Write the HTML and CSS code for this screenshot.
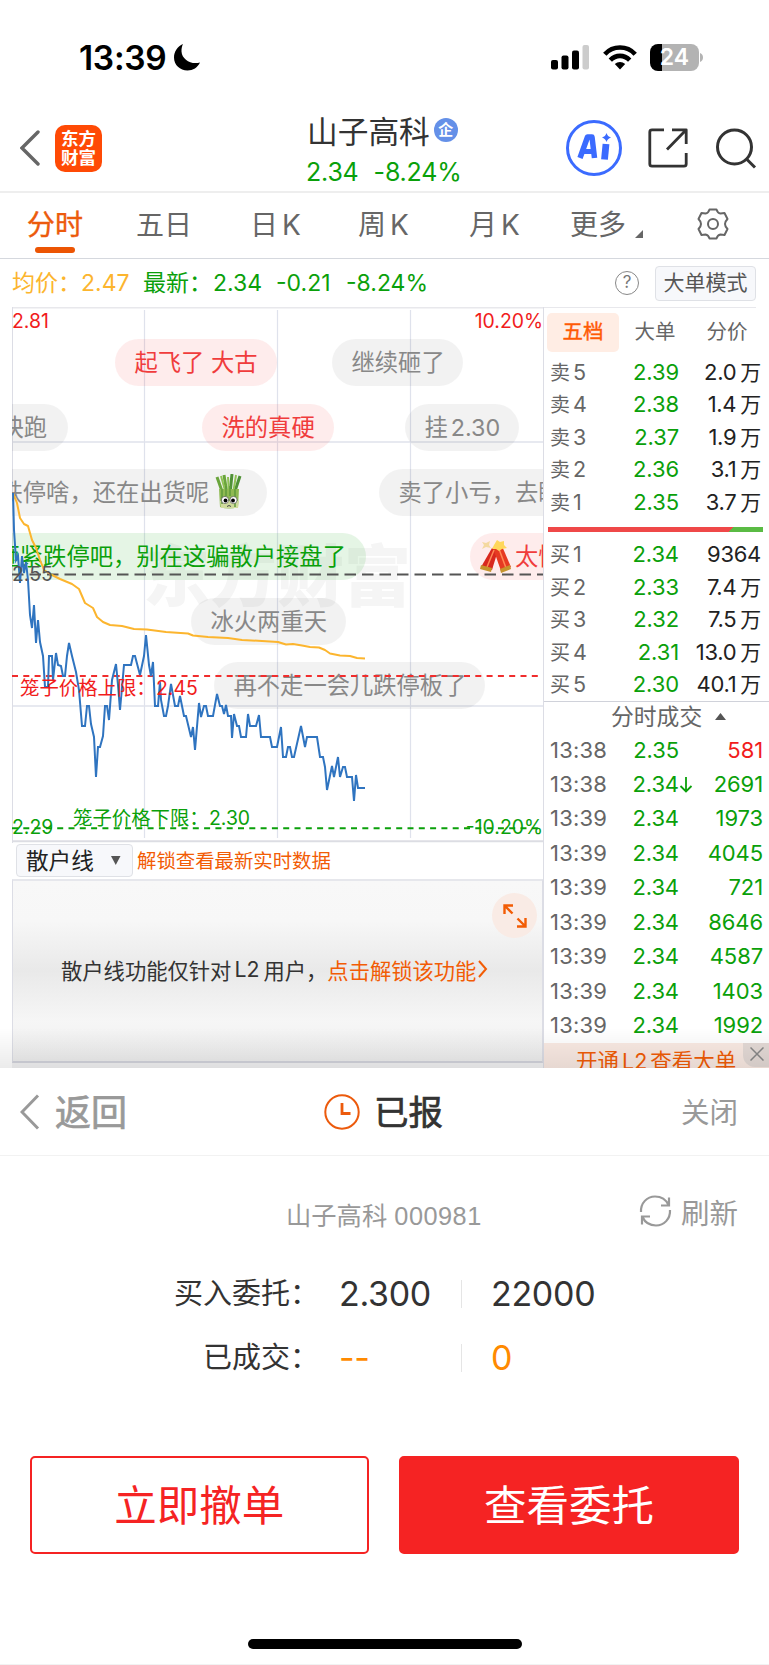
FILE: index.html
```html
<!DOCTYPE html>
<html lang="zh">
<head>
    <meta charset="UTF-8">
    <meta name="viewport" content="width=device-width, initial-scale=1.0">
    <title>山子高科</title>
    <link rel="stylesheet" href="styles.css">
</head>
<body>
    <div class="page">
        <!-- 状态栏 -->
        <div class="status-bar">
            <span class="time">13:39</span>
            <svg class="moon" width="26" height="27" viewBox="0 0 26 27"><path d="M9 0C3.500 2.500 0 7.500 0 13.500C0 21 6 26.500 13.500 26.500C19 26.500 23.700 23.500 26 18.500C17 21 8 15.500 7.500 7.500C7.400 4.500 8 2 9 0Z"/></svg>
            <svg class="signal" width="38" height="25" viewBox="0 0 38 25"><rect x="0" y="15" width="7" height="9.500" rx="2"/><rect x="10.500" y="10.500" width="7" height="14" rx="2"/><rect x="21" y="5.500" width="7" height="19" rx="2"/><rect x="31.500" y="0" width="6.500" height="24.500" rx="2" fill="#ccc"/></svg>
            <svg class="wifi" width="34" height="25" viewBox="0 0 34 25"><g fill="none" stroke="#000" stroke-width="4.600"><path d="M1.800 9.200C10 .3 24 .3 32.200 9.200"/><path d="M7.300 15.200C12.800 9.400 21.200 9.400 26.700 15.200"/></g><path d="M11.800 19C14.800 16.200 19.200 16.200 22.200 19L17 24.500Z"/></svg>
            <div class="battery">24</div>
            <svg class="battery-cap" width="4" height="9" viewBox="0 0 4 9"><path d="M0 0C4 1 4 8 0 9Z" fill="#b3b3b3"/></svg>
        </div>

        <!-- 标题 -->
        <div class="header">
            <svg class="back" width="20" height="36" viewBox="0 0 20 36"><path d="M18 2L2 18L18 34" fill="none" stroke="#666" stroke-width="3.400" stroke-linecap="round"/></svg>
            <div class="logo"><span>东方</span><span>财富</span></div>
            <div class="title">
                <div class="name">山子高科<span class="badge">企</span></div>
                <div class="price"><span>2.34</span><span>-8.24%</span></div>
            </div>
            <svg class="ai" width="56" height="56" viewBox="0 0 56 56"><circle cx="28" cy="28" r="26.500" fill="#fff" stroke="#3b6bff" stroke-width="3"/><path d="M14 38L21.500 17H26L28.500 38" fill="none" stroke="#3b6bff" stroke-width="5.500" stroke-linejoin="round"/><path d="M16 31.500H28" stroke="#3b6bff" stroke-width="5"/><path d="M40 24L38.500 39.500" stroke="#3b6bff" stroke-width="6.800"/><path d="M40.500 13Q41.500 16.500 45 17.500Q41.500 18.500 40.500 22Q39.500 18.500 36 17.500Q39.500 16.500 40.500 13Z" fill="#3b6bff"/></svg>
            <svg class="share" width="40" height="40" viewBox="0 0 40 40"><g fill="none" stroke="#333" stroke-width="2.800" stroke-linejoin="round"><path d="M16 1.800H4Q1.800 1.800 1.800 4V36Q1.800 38.200 4 38.200H36Q38.200 38.200 38.200 36V25"/><path d="M24 1.800H38.200V16M37.500 2.500L19 21.500"/></g></svg>
            <svg class="search" width="41" height="41" viewBox="0 0 41 41"><g fill="none" stroke="#333" stroke-width="3"><circle cx="18.500" cy="19" r="17"/><path d="M31 31.500L39 39.500"/></g></svg>
        </div>

        <!-- 周期切换 -->
        <div class="tabs">
            <div class="tab t1 active">分时</div>
            <div class="tab t2">五日</div>
            <div class="tab t3">日<i>K</i></div>
            <div class="tab t4">周<i>K</i></div>
            <div class="tab t5">月<i>K</i></div>
            <div class="tab t6">更多</div>
            <svg class="corner" width="8" height="8"><path d="M8 0V8H0Z" fill="#666"/></svg>
            <svg class="gear" width="32" height="32" viewBox="0 0 32 32"><g fill="none" stroke="#666" stroke-width="2"><path d="M12.500 1.500H19.500Q20.500 5 23.500 5.500L27.500 5L30.500 11Q28 13.500 28 16Q28 18.500 30.500 21L27.500 27L23.500 26.500Q20.500 27 19.500 30.500H12.500Q11.500 27 8.500 26.500L4.500 27L1.500 21Q4 18.500 4 16Q4 13.500 1.500 11L4.500 5L8.500 5.500Q11.500 5 12.500 1.500Z" stroke-linejoin="round"/><circle cx="16" cy="16" r="5"/></g></svg>
        </div>

        <div class="info">
            <span class="avg">均价：</span><span class="avg v1">2.47</span>
            <span class="green l2">最新：</span><span class="green v2">2.34</span><span class="green v3">-0.21</span><span class="green v4">-8.24%</span>
            <span class="help">?</span>
            <span class="mode">大单模式</span>
        </div>

        <div class="main">
            <div class="left">
                <!-- 分时图 -->
                <div class="chart">
                    <svg class="chart-svg" width="532" height="536" viewBox="12 307 532 536">
                        <g stroke="#dfe2ec" stroke-width="1.200">
                            <path d="M144.500 310V838M277.500 310V838M410.500 310V838"/>
                            <path d="M12 442H543M12 706H543" stroke-width="1.500"/>
                        </g>
                        <path d="M12 307.800H543" stroke="#e8e8ec" stroke-width="1.600"/>
                        <path d="M12.500 307V843" stroke="#dcdde5"/>
                        <path d="M12 841.200H543" stroke="#dcdde3" stroke-width="2"/>
                        <text class="watermark" x="143" y="601">东方财富</text>
                    </svg>

                    <!-- 弹幕 -->
                    <div class="danmu">
                        <span class="pill red" style="left:103px;top:32px;width:162px">起飞了 大古</span>
                        <span class="pill" style="left:320px;top:32px;width:131px">继续砸了</span>
                        <span class="pill end" style="left:-40px;top:97px;width:96px">快跑</span>
                        <span class="pill red" style="left:190px;top:97px;width:132px">洗的真硬</span>
                        <span class="pill" style="left:393px;top:97px;width:114px">挂<i>2.30</i></span>
                        <span class="pill" style="left:-32px;top:162px;width:287px">跌停啥，还在出货呢
                            <svg class="leek" width="28" height="36" viewBox="0 0 28 36"><g fill="none" stroke-width="3"><path d="M8 20L2 3M12 20L9 1" stroke="#6aa53c"/><path d="M15 20L17 0M19 20L25 2" stroke="#4f9136"/><path d="M11 20L6 2M14 20L13 3M18 20L21 1" stroke="#8fc255" stroke-width="2"/></g><path d="M4 15H24L23 33Q14 36 5 33Z" fill="#8fba52"/><path d="M5 27H24L23 34H6Z" fill="#cfdb9c"/><path d="M7 15V30M11 12V22M15 12V22M20 15V33" stroke="#5f9a3c" stroke-width="1.500"/><circle cx="10" cy="26" r="3.600" fill="#fff" stroke="#555" stroke-width=".7"/><circle cx="18.500" cy="26" r="3.600" fill="#fff" stroke="#555" stroke-width=".7"/><circle cx="10.500" cy="26.500" r="1.900"/><circle cx="18" cy="26.500" r="1.900"/><path d="M12 32.500Q14 30.500 16 32.500" fill="none" stroke="#444"/></svg></span>
                        <span class="pill" style="left:367px;top:162px;width:220px">卖了小亏，去睡觉</span>
                        <span class="pill grn" style="left:-35px;top:226px;width:389px">砸紧跌停吧，别在这骗散户接盘了</span>
                        <span class="pill red cracker" style="left:458px;top:226px;width:140px">
                            <svg width="32" height="34" viewBox="0 0 32 34"><path d="M12 8L19 7L12 30L1 27Z" fill="#d8281e"/><path d="M13 8L22 6L31 27L21 31Z" fill="#e63a22"/><path d="M14 10L7 27M19 9L26 28" stroke="#ff8a55" stroke-width="1.500"/><path d="M1 25L12 28L11 32L0 29ZM20 29L30 25L31 29L21 33Z" fill="#c6942c"/><path d="M17 0L20 2L24 1L24 5L27 8L22 9L19 11L16 9L12 9L14 5Z" fill="#ffd75c"/><path d="M2 2L6 3L10 1L9 5L11 8L6 7L2 9L4 5Z" fill="#f4d9a0"/></svg>太惨了</span>
                        <span class="pill" style="left:179px;top:291px;width:155px">冰火两重天</span>
                        <span class="pill" style="left:202px;top:355px;width:271px">再不走一会儿跌停板了</span>
                    </div>

                    <svg class="chart-svg over" width="532" height="536" viewBox="12 307 532 536">
                        <path d="M12 574.500H543" stroke="#555" stroke-width="1.800" stroke-dasharray="11.500 6"/>
                        <path d="M12 676H543" stroke="#f02d2d" stroke-width="2" stroke-dasharray="6 5.300"/>
                        <path d="M12 828.300H543" stroke="#0aa00a" stroke-width="2" stroke-dasharray="6 5.300"/>
                        <polyline class="avg-line" points="13,493 17,503 20,518 24,524 28,526 32,540 36,548 40,560 44,570 52,575 60,579 72,584 79,589 85,603 93,608 97,617 103,622 110,625 122,626 134,629 147,629.500 166,632 188,633.500 193,635.500 208,637 228,638 242,640 262,641 278,642 286,644.500 293,644 302,645.500 310,647 319,647.500 325,650 330,653.500 340,655.500 350,656 357,658 365,658.500"/>
                        <polyline class="price-line" points="13,493 14,530 16,560 18,556 20,583 22,556 24,573 26,562 28,580 30,615 32,628 34,605 36,643 38,620 40,642 43,656 45,687 48,687 49,656 52,656 53,680 56,653 58,665 61,666 63,676 65,676 67,656 69,643 72,656 76,672 79,690 82,726 85,726 87,706 89,706 91,724 94,737 96,777 98,747 100,747 103,736 105,706 107,706 109,720 112,680 116,664 118,685 120,710 124,665 131,665 133,656 135,656 140,675 144,656 146,635 149,665 151,676 153,662 155,706 158,706 160,682 161,700 164,716 166,716 168,706 171,684 175,706 178,706 180,696 184,716 186,716 191,737 193,727 195,750 199,703 201,717 204,706 206,706 208,716 213,716 217,694 220,706 222,706 224,714 226,705 228,716 231,716 232,738 234,714 237,726 239,726 241,737 246,737 248,714 250,726 256,726 259,715 261,737 270,737 272,747 277,747 281,727 283,757 286,757 288,747 290,747 292,757 294,757 301,726 305,747 307,737 317,737 320,757 323,757 325,767 327,790 332,766 334,777 338,757 340,777 343,767 345,767 347,777 352,777 354,801 356,775 358,788 365,788"/>
                        <text class="lab" x="12" y="327.500" fill="#f11c1c">2.81</text>
                        <text class="lab" x="543" y="327.500" fill="#f11c1c" text-anchor="end">10.20%</text>
                        <text class="lab" x="12" y="581" fill="#555">2.55</text>
                        <text class="lab" x="12" y="834" fill="#0aa00a">2.29</text>
                        <text class="lab" x="543" y="834" fill="#0aa00a" text-anchor="end">-10.20%</text>
                        <text class="lab" x="20" y="695" fill="#f11c1c">笼子价格上限：<tspan x="156">2.45</tspan></text>
                        <text class="lab" x="73" y="825" fill="#0aa00a">笼子价格下限：<tspan x="209">2.30</tspan></text>
                    </svg>
                </div>

                <div class="indicator">
                    <div class="select">散户线<svg width="10" height="9"><path d="M0 0H9.500L4.750 9Z" fill="#555"/></svg></div>
                    <span class="unlock">解锁查看最新实时数据</span>
                </div>

                <div class="locked">
                    <div class="expand"><svg width="24" height="24" viewBox="0 0 24 24"><path d="M1.500 10V1.500H10M2 2L9.500 9.500M22.500 14V22.500H14M22 22L14.500 14.500" fill="none" stroke="#f25c05" stroke-width="2.400"/></svg></div>
                    <div class="locked-text">散户线功能仅针对<i>L2</i>用户，<em>点击解锁该功能</em><svg width="10" height="18"><path d="M1 1L8 9L1 17" fill="none" stroke="#f25c05" stroke-width="2"/></svg></div>
                </div>
                <div class="strip"></div>
            </div>

            <!-- 五档盘口 -->
            <div class="right">
                <div class="rtabs"><span class="on">五档</span><span>大单</span><span>分价</span></div>
                <div class="book">
                    <div class="row"><span>卖<i>5</i></span><b>2.39</b><u>2.0<s>万</s></u></div>
                    <div class="row"><span>卖<i>4</i></span><b>2.38</b><u>1.4<s>万</s></u></div>
                    <div class="row"><span>卖<i>3</i></span><b>2.37</b><u>1.9<s>万</s></u></div>
                    <div class="row"><span>卖<i>2</i></span><b>2.36</b><u>3.1<s>万</s></u></div>
                    <div class="row"><span>卖<i>1</i></span><b>2.35</b><u>3.7<s>万</s></u></div>
                </div>
                <div class="ratio"></div>
                <div class="book">
                    <div class="row"><span>买<i>1</i></span><b>2.34</b><u>9364</u></div>
                    <div class="row"><span>买<i>2</i></span><b>2.33</b><u>7.4<s>万</s></u></div>
                    <div class="row"><span>买<i>3</i></span><b>2.32</b><u>7.5<s>万</s></u></div>
                    <div class="row"><span>买<i>4</i></span><b>2.31</b><u>13.0<s>万</s></u></div>
                    <div class="row"><span>买<i>5</i></span><b>2.30</b><u>40.1<s>万</s></u></div>
                </div>
                <div class="deal-title">分时成交<svg width="11" height="7"><path d="M5.500 0L11 7H0Z" fill="#555"/></svg></div>
                <div class="deals">
                    <div class="row"><span>13:38</span><b>2.35</b><u class="up">581</u></div>
                    <div class="row"><span>13:38</span><b>2.34<svg class="down" width="14" height="17" viewBox="0 0 14 17"><path d="M7 1V15.500M1.500 10L7 15.500L12.500 10" fill="none" stroke="#0aa00a" stroke-width="1.800"/></svg></b><u>2691</u></div>
                    <div class="row"><span>13:39</span><b>2.34</b><u>1973</u></div>
                    <div class="row"><span>13:39</span><b>2.34</b><u>4045</u></div>
                    <div class="row"><span>13:39</span><b>2.34</b><u>721</u></div>
                    <div class="row"><span>13:39</span><b>2.34</b><u>8646</u></div>
                    <div class="row"><span>13:39</span><b>2.34</b><u>4587</u></div>
                    <div class="row"><span>13:39</span><b>2.34</b><u>1403</u></div>
                    <div class="row"><span>13:39</span><b>2.34</b><u>1992</u></div>
                </div>
                <div class="banner">
                    <span>开通<i>L2</i>查看大单</span>
                    <div class="close"><svg width="14" height="14"><path d="M.5 .5L13.500 13.500M13.500 .5L.5 13.500" stroke="#888" stroke-width="1.500"/></svg></div>
                </div>
            </div>
            <div class="shade"></div>
        </div>

        <!-- 委托弹层 -->
        <div class="sheet">
            <div class="sheet-head">
                <div class="sheet-back"><svg width="20" height="36" viewBox="0 0 20 36"><path d="M18 1.500L2 18L18 34.500" fill="none" stroke="#999" stroke-width="3"/></svg><span>返回</span></div>
                <div class="sheet-title"><svg width="36" height="36" viewBox="0 0 36 36"><circle cx="18" cy="18" r="16.700" fill="none" stroke="#ec5a0c" stroke-width="2"/><path d="M18 9V19.500H26.500" fill="none" stroke="#ec5a0c" stroke-width="2.800"/></svg><span>已报</span></div>
                <div class="sheet-close">关闭</div>
            </div>
            <div class="stock">
                <span class="stock-name">山子高科 <i>000981</i></span>
                <div class="refresh"><svg width="33" height="32" viewBox="0 0 33 32"><g fill="none" stroke="#999" stroke-width="2.200"><path d="M2 17C1.500 8 8 1.500 16 1.500C22 1.500 27 4.500 29.500 10M30 2.500V10.500H22"/><path d="M31 15C31.500 24 25 30.500 17 30.500C11 30.500 6 27.500 3.500 22M3 29.500V21.500H11"/></g></svg>刷新</div>
            </div>
            <div class="orders">
                <div class="order"><label>买入委托：</label><span>2.300</span><span class="qty">22000</span></div>
                <div class="order done"><label>已成交：</label><span>--</span><span class="qty">0</span></div>
            </div>
            <div class="buttons">
                <div class="btn">立即撤单</div>
                <div class="btn primary">查看委托</div>
            </div>
            <div class="home-bar"></div>
        </div>
    </div>
</body>
</html>
```

FILE: styles.css
```css
* {
    margin: 0;
    padding: 0;
    box-sizing: border-box;
}

body {
    width: 769px;
    height: 1665px;
    overflow: hidden;
    background: #fff;
    font-family: Inter, "Noto Sans CJK SC", sans-serif;
    color: #333;
    white-space: nowrap;
}

i, em, b, u, s {
    font-style: normal;
    font-weight: 400;
    text-decoration: none;
}

svg {
    display: block;
    flex: none;
}

.page {
    display: flex;
    flex-direction: column;
    height: 1665px;
}

/* 状态栏 */
.status-bar {
    display: flex;
    align-items: center;
    height: 115px;
    padding-left: 79px;
    flex: none;
}

.time {
    width: 95px;
    font-size: 33.500px;
    font-weight: 600;
    line-height: 40px;
    letter-spacing: -0.300px;
    color: #000;
}

.signal {
    margin-left: 351px;
}

.wifi {
    margin-left: 14px;
}

.battery {
    width: 49px;
    height: 27px;
    margin-left: 13px;
    border-radius: 8px;
    background: linear-gradient(90deg, #000 12px, #b3b3b3 12px);
    color: #fff;
    font-size: 23px;
    font-weight: 600;
    line-height: 27px;
    text-align: center;
}

.battery-cap {
    margin-left: 1px;
}

/* 标题 */
.header {
    display: flex;
    align-items: center;
    height: 78px;
    padding: 0 12px 10px 20px;
    border-bottom: 2px solid #eee;
    flex: none;
}

.logo {
    display: flex;
    flex-direction: column;
    align-items: center;
    justify-content: center;
    width: 47px;
    height: 47px;
    margin-left: 15px;
    border-radius: 10px;
    background: #ff4a05;
    color: #fff;
    font-size: 17.500px;
    font-weight: 700;
    line-height: 19.500px;
}

.title {
    width: 205px;
    margin-left: 205px;
    padding-top: 3px;
}

.name {
    display: flex;
    align-items: center;
    height: 36px;
    font-size: 30.700px;
}

.badge {
    width: 24px;
    height: 24px;
    margin-left: 4px;
    border-radius: 50%;
    background: #6490e8;
    color: #fff;
    font-size: 15px;
    font-weight: 700;
    line-height: 23px;
    text-align: center;
}

.price {
    display: flex;
    gap: 15px;
    height: 40px;
    margin-left: -1px;
    line-height: 48px;
    font-size: 25px;
    letter-spacing: -0.200px;
    color: #0aa00a;
}

.ai {
    margin-left: 54px;
}

.share {
    margin-left: 26px;
}

.search {
    margin-left: 28px;
}

/* 周期切换 */
.tabs {
    display: flex;
    align-items: center;
    height: 66px;
    border-bottom: 1.500px solid #d5d8de;
    flex: none;
}

.tab {
    height: 66px;
    font-size: 28px;
    line-height: 64px;
    color: #666;
}

.tab i {
    margin-left: 4px;
}

.t1 { margin-left: 27px; width: 109px; }
.t2 { width: 114px; }
.t3 { width: 108px; }
.t4 { width: 111px; }
.t5 { width: 101px; }
.t6 { width: 65px; }

.tab.active {
    color: #ec5a0c;
    -webkit-text-stroke: 0.400px #ec5a0c;
}

.tab.active::after {
    content: "";
    display: block;
    width: 40px;
    height: 6px;
    margin: -10px 0 0 8px;
    border-radius: 3px;
    background: #ec5504;
}

.corner {
    margin-top: 17px;
}

.gear {
    margin-left: 54px;
    margin-top: -3px;
}

.info {
    display: flex;
    align-items: center;
    height: 48px;
    padding: 0 13px 0 12px;
    font-size: 23px;
    line-height: 50px;
    flex: none;
}

.avg { color: #fcb52e; }
.green { color: #0aa00a; }
.v1 { width: 62px; }
.l2 { width: 70px; }
.v2 { width: 63px; }
.v3 { width: 70px; }
.avg:first-child { width: 69px; }

.help {
    width: 24px;
    height: 24px;
    margin-left: auto;
    border: 1.500px solid #888;
    border-radius: 50%;
    font-size: 17px;
    line-height: 21px;
    text-align: center;
    color: #777;
}

.mode {
    width: 101px;
    height: 35px;
    margin-left: 16px;
    border: 1.500px solid #dfe1e6;
    border-radius: 4px;
    background: #f7f8fb;
    font-size: 21px;
    line-height: 32px;
    text-align: center;
    color: #555;
}

/* 主体 */
.main {
    position: relative;
    display: flex;
    height: 761px;
    overflow: hidden;
    flex: none;
}

.left {
    width: 531px;
    margin-left: 12px;
}

.chart {
    position: relative;
    height: 536px;
    overflow: hidden;
}

.chart-svg.over {
    position: absolute;
    left: 0;
    top: 0;
}

.watermark {
    font-size: 67px;
    font-weight: 900;
    fill: #f5f5f5;
}

.lab {
    font-size: 19.400px;
}

.avg-line, .price-line {
    fill: none;
    stroke: #fcb52e;
    stroke-width: 2;
    stroke-linejoin: round;
}

.price-line {
    stroke: #2f74c0;
    stroke-linejoin: miter;
}

.danmu {
    position: absolute;
    left: 0;
    top: 0;
    width: 531px;
    height: 536px;
    overflow: hidden;
}

.pill {
    position: absolute;
    display: flex;
    align-items: center;
    height: 46.500px;
    padding-left: 19.500px;
    padding-top: 1.500px;
    border-radius: 24px;
    background: rgba(0, 0, 0, 0.05);
    color: #888;
    font-size: 23.300px;
    line-height: 46px;
}

.pill.end {
    justify-content: flex-end;
    padding-right: 21px;
}

.pill i {
    margin-left: 3px;
}

.pill.red {
    background: rgba(240, 40, 40, 0.09);
    color: #f03c3c;
}

.pill.grn {
    background: rgba(20, 160, 20, 0.11);
    color: #0aa00a;
}

.leek {
    margin-left: 6px;
    margin-top: -2px;
}

.pill.cracker {
    gap: 3px;
    padding-left: 10px;
}

.indicator {
    display: flex;
    align-items: center;
    height: 36px;
    padding-left: 4px;
}

.select {
    display: flex;
    align-items: center;
    justify-content: space-between;
    width: 117px;
    height: 33px;
    margin-top: -1px;
    padding: 0 11px 0 9px;
    border: 1.500px solid #dfe1e6;
    border-radius: 4px;
    background: #f7f8fb;
    font-size: 22.600px;
    line-height: 30px;
    color: #222;
}

.unlock {
    margin: -3px 0 0 4px;
    font-size: 19.400px;
    color: #f25c05;
}

.locked {
    position: relative;
    height: 184px;
    border: 1px solid #dcdde5;
    border-top: 2px solid #e6e7ec;
    border-bottom: 2px solid #d3d4dc;
    background: linear-gradient(#f8f8f8 0%, #f7f7f7 22%, #e9e9e9 50%, #ececec 56%, #f6f6f6 78%, #eee 100%);
}

.expand {
    position: absolute;
    right: 5px;
    top: 12px;
    display: flex;
    align-items: center;
    justify-content: center;
    width: 45px;
    height: 45px;
    border-radius: 50%;
    background: #f9ebe5;
}

.locked-text {
    display: flex;
    align-items: center;
    height: 40px;
    margin: 68px 0 0 48px;
    font-size: 21.300px;
    color: #333;
}

.locked-text i {
    margin: 0 4px 0 3px;
}

.locked-text em {
    color: #f25c05;
}

.locked-text svg {
    margin-left: 2px;
}

.strip {
    height: 5px;
    background: #f2f2f3;
}

/* 右侧盘口 */
.right {
    width: 226px;
    border-left: 1.500px solid #dcdde5;
    font-size: 22px;
}

.rtabs {
    display: flex;
    height: 45px;
    padding: 5px 0 0 3px;
    border-top: 1.500px solid #e8e8ec;
    margin-right: 13px;
}

.rtabs span {
    width: 72px;
    height: 39px;
    flex: none;
    border-radius: 5px;
    font-size: 20.500px;
    line-height: 38px;
    text-align: center;
    color: #666;
}

.rtabs .on {
    background: #ffede4;
    color: #ff5a05;
    -webkit-text-stroke: 0.400px #ff5a05;
}

.book {
    padding-top: 3.500px;
}

.row {
    display: flex;
    height: 32.500px;
    padding: 0 6px 0 6px;
    line-height: 32.500px;
}

.row span {
    width: 60px;
    color: #666;
}

.row span {
    font-size: 20px;
}

.row s {
    font-size: 21px;
}

.row span i {
    margin-left: 3px;
    font-size: 21.500px;
}

.row b {
    position: relative;
    width: 69px;
    text-align: right;
    letter-spacing: -0.100px;
    color: #0aa00a;
}

.row u {
    flex: 1;
    padding-right: 2px;
    text-align: right;
    letter-spacing: -0.300px;
    color: #222;
}

.row s {
    margin-left: 4px;
}

.ratio {
    display: flex;
    height: 5px;
    margin: 9px 6px 2.500px 4px;
    background: linear-gradient(135deg, #ef4848 131px, #5abb44 131px);
}

.deal-title {
    display: flex;
    align-items: center;
    height: 33px;
    padding: 0 0 2px 67px;
    border-top: 1.500px solid #d0d2da;
    font-size: 22.800px;
    line-height: 30px;
    color: #666;
}

.deal-title svg {
    margin-left: 13px;
}

.deals .row {
    height: 34.450px;
    line-height: 33px;
}

.deals .row span {
    font-size: 22px;
    letter-spacing: 0.200px;
}

.deals u {
    padding-right: 0;
    letter-spacing: -0.100px;
    color: #0aa00a;
}

.deals .up {
    color: #f11c1c;
}

.down {
    position: absolute;
    left: 69px;
    top: 8px;
}

.banner {
    position: relative;
    height: 34px;
    padding-left: 32px;
    background: #faeae3;
    font-size: 21.500px;
    line-height: 36px;
    color: #f25c05;
}

.banner i {
    margin: 0 3px;
}

.close {
    position: absolute;
    right: 0;
    top: 0;
    width: 26px;
    height: 24px;
    padding: 4px 0 0 7px;
    border-radius: 0 0 0 12px;
    background: #e4dad6;
}

.shade {
    position: absolute;
    left: 0;
    right: 0;
    bottom: 0;
    height: 40px;
    background: linear-gradient(rgba(0, 0, 0, 0), rgba(0, 0, 0, 0.08));
}

/* 委托弹层 */
.sheet {
    flex: 1;
    background: #fff;
    border-bottom: 1px solid #f2f2f2;
}

.sheet-head {
    display: flex;
    align-items: center;
    height: 88px;
    padding: 0 31px 0 20px;
    border-bottom: 1px solid #f2f2f2;
}

.sheet-back {
    display: flex;
    align-items: center;
    gap: 15px;
    width: 304px;
    font-size: 36px;
    color: #999;
    -webkit-text-stroke: 0.700px #999;
}

.sheet-back span, .sheet-title span {
    margin-top: -4px;
}

.sheet-title {
    display: flex;
    align-items: center;
    gap: 14px;
    font-size: 34.500px;
    -webkit-text-stroke: 0.700px #333;
}

.sheet-close {
    margin: -2px 0 0 auto;
    font-size: 28.500px;
    color: #999;
}

.stock {
    display: flex;
    align-items: center;
    height: 112px;
    padding: 0 31px 0 286px;
    color: #999;
    font-size: 25.300px;
}

.stock-name {
    padding-top: 3px;
}

.stock-name i {
    font-family: "Liberation Sans", sans-serif;
    letter-spacing: 0.500px;
}

.refresh {
    display: flex;
    align-items: center;
    gap: 9px;
    margin: -2px 0 0 auto;
    font-size: 28.500px;
}

.orders {
    padding-left: 148px;
    margin-top: -6px;
}

.order {
    display: flex;
    align-items: center;
    height: 64px;
    line-height: 64px;
    font-size: 34px;
    letter-spacing: -0.300px;
}

.order label {
    width: 171px;
    text-align: right;
    font-size: 29px;
    letter-spacing: 0;
}

.order span {
    width: 142px;
    padding-left: 20px;
}

.order .qty {
    height: 28px;
    padding-left: 29px;
    line-height: 28px;
    border-left: 1px solid #e5e5e5;
}

.done span {
    color: #ff8a00;
}

.buttons {
    display: flex;
    gap: 30px;
    margin: 66px 30px 0 29.500px;
}

.btn {
    flex: 1;
    height: 98px;
    border: 2px solid #f52323;
    border-radius: 5px;
    font-size: 42.500px;
    line-height: 95px;
    text-align: center;
    color: #f52323;
}

.btn.primary {
    background: #f52323;
    color: #fff;
}

.home-bar {
    width: 274px;
    height: 10px;
    margin: 85px auto 0;
    border-radius: 5px;
    background: #000;
}
```
